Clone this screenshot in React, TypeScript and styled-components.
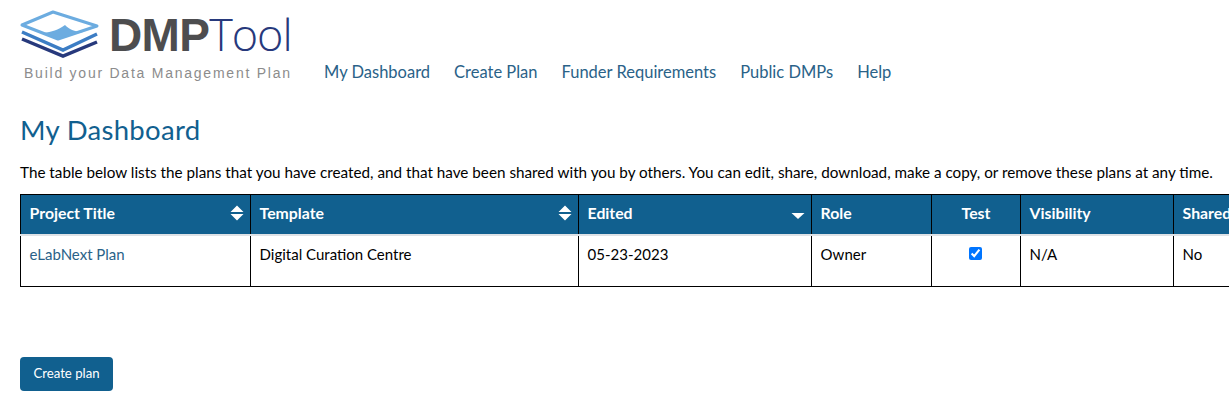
import styled, { createGlobalStyle } from "styled-components";

const GlobalStyle = createGlobalStyle`
  html, body {
    margin: 0;
    padding: 0;
    background: #fff;
    overflow: hidden;
  }
  body {
    font-family: "Lato", "Liberation Sans", sans-serif;
    font-size: 15px;
    color: #000;
  }
`;

const Page = styled.div`
  width: 1229px;
  height: 411px;
  overflow: hidden;
  padding: 0 0 0 20px;
  box-sizing: border-box;
`;

const Header = styled.header`
  display: flex;
  align-items: flex-start;
  height: 101px;
`;

const Logo = styled.div`
  width: 304px;
  padding-top: 9px;
  display: flex;
  flex-direction: column;
`;

const LogoTop = styled.div`
  display: flex;
  align-items: flex-start;
  height: 50px;
`;

const LogoMark = styled.svg`
  width: 79px;
  height: 50px;
  flex: none;
`;

const Wordmark = styled.div`
  margin-left: 10px;
  font-family: "Liberation Sans", sans-serif;
  font-size: 46px;
  line-height: 50px;
  letter-spacing: -0.7px;
  white-space: nowrap;
`;

const WordBold = styled.span`
  font-weight: 700;
  color: #4d4d4f;
`;

const WordLight = styled.span`
  font-family: "Open Sans", sans-serif;
  font-weight: 300;
  font-size: 45px;
  color: #27397c;
  letter-spacing: -1px;
`;

const Tagline = styled.div`
  margin: 6px 0 0 4px;
  font-family: "Liberation Sans", sans-serif;
  font-size: 14px;
  line-height: 16px;
  letter-spacing: 1.76px;
  color: #8c8c8c;
  white-space: nowrap;
`;

const Nav = styled.nav`
  display: flex;
  gap: 24px;
  padding-top: 62px;
`;

const NavLink = styled.a`
  font-size: 16.5px;
  line-height: 21px;
  color: #2a6288;
  white-space: nowrap;
`;

const Title = styled.h1`
  margin: 0;
  font-size: 27.5px;
  line-height: 60px;
  font-weight: 400;
  letter-spacing: 0.3px;
  color: #11608f;
  transform: translateY(-1px);
`;

const Intro = styled.p`
  margin: 0;
  height: 33px;
  font-size: 15.25px;
  line-height: 22px;
  white-space: nowrap;
`;

const Table = styled.table`
  table-layout: fixed;
  width: 1260px;
  border-collapse: collapse;
`;

const HeadCell = styled.th<{ $center?: boolean }>`
  position: relative;
  height: 40px;
  padding: 0 8.6px 3px;
  box-sizing: border-box;
  background: #11608f;
  border: 1px solid #000;
  border-bottom: 2px solid #dee2e6;
  color: #fff;
  font-size: 15.8px;
  font-weight: 700;
  text-align: ${(p) => (p.$center ? "center" : "left")};
  white-space: nowrap;
  overflow: hidden;
`;

const SortIcon = styled.svg`
  position: absolute;
  right: 6px;
  top: 50%;
  width: 14px;
  height: 16px;
  margin-top: -9px;
`;

const BodyCell = styled.td<{ $center?: boolean }>`
  height: 52px;
  padding: 8px 8.6px 0;
  box-sizing: border-box;
  vertical-align: top;
  border: 1px solid #000;
  font-size: 15px;
  line-height: 20px;
  text-align: ${(p) => (p.$center ? "center" : "left")};
  white-space: nowrap;
  overflow: hidden;
`;

const PlanLink = styled.a`
  color: #2a6288;
`;

const Check = styled.input`
  width: 13px;
  height: 13px;
  margin: 3px 1px 0 0;
  accent-color: #0075ff;
`;

const CreateButton = styled.button`
  display: block;
  margin-top: 70px;
  width: 93px;
  height: 34px;
  padding: 0 0 2px;
  border: none;
  border-radius: 4px;
  background: #11608f;
  color: #fff;
  font-family: inherit;
  font-size: 13.2px;
`;

const SortBoth = () => (
  <SortIcon viewBox="0 0 14 16">
    <path fill="#fff" d="M7 0.5 13.5 7H0.5ZM0.5 9H13.5L7 15.5Z" />
  </SortIcon>
);

const SortDown = () => (
  <SortIcon viewBox="0 0 14 16">
    <path fill="#fff" d="M0.5 8H13.5L7 14Z" />
  </SortIcon>
);

const columns = [230, 328, 233, 120, 89, 153, 107];

export default function App() {
  return (
    <Page>
      <GlobalStyle />
      <Header>
        <Logo>
          <LogoTop>
            <LogoMark viewBox="0 0 79 50">
              <path
                d="M2 30 L43 47 L77 33"
                fill="none"
                stroke="#27397c"
                strokeWidth="3.5"
              />
              <path
                d="M2 23 L43 41 L77 25"
                fill="none"
                stroke="#3c7dc4"
                strokeWidth="3.5"
              />
              <path
                d="M2 16 L33 3 L77 17 L38 30 Z"
                fill="#fff"
                stroke="#6cace0"
                strokeWidth="3"
                strokeLinejoin="round"
              />
              <path
                d="M23 24 C32 23 38 21 45 16 C49 20 54 23 63 23 L38 29 Z"
                fill="#6cace0"
              />
            </LogoMark>
            <Wordmark>
              <WordBold>DMP</WordBold>
              <WordLight>Tool</WordLight>
            </Wordmark>
          </LogoTop>
          <Tagline>Build your Data Management Plan</Tagline>
        </Logo>
        <Nav>
          <NavLink>My Dashboard</NavLink>
          <NavLink>Create Plan</NavLink>
          <NavLink>Funder Requirements</NavLink>
          <NavLink>Public DMPs</NavLink>
          <NavLink>Help</NavLink>
        </Nav>
      </Header>
      <Title>My Dashboard</Title>
      <Intro>
        The table below lists the plans that you have created, and that have
        been shared with you by others. You can edit, share, download, make a
        copy, or remove these plans at any time.
      </Intro>
      <Table>
        <colgroup>
          {columns.map((w, i) => (
            <col key={i} style={{ width: w }} />
          ))}
        </colgroup>
        <thead>
          <tr>
            <HeadCell>
              Project Title
              <SortBoth />
            </HeadCell>
            <HeadCell>
              Template
              <SortBoth />
            </HeadCell>
            <HeadCell>
              Edited
              <SortDown />
            </HeadCell>
            <HeadCell>Role</HeadCell>
            <HeadCell $center>Test</HeadCell>
            <HeadCell>Visibility</HeadCell>
            <HeadCell>Shared</HeadCell>
          </tr>
        </thead>
        <tbody>
          <tr>
            <BodyCell>
              <PlanLink>eLabNext Plan</PlanLink>
            </BodyCell>
            <BodyCell>Digital Curation Centre</BodyCell>
            <BodyCell>05-23-2023</BodyCell>
            <BodyCell>Owner</BodyCell>
            <BodyCell $center>
              <Check type="checkbox" defaultChecked />
            </BodyCell>
            <BodyCell>N/A</BodyCell>
            <BodyCell>No</BodyCell>
          </tr>
        </tbody>
      </Table>
      <CreateButton>Create plan</CreateButton>
    </Page>
  );
}
